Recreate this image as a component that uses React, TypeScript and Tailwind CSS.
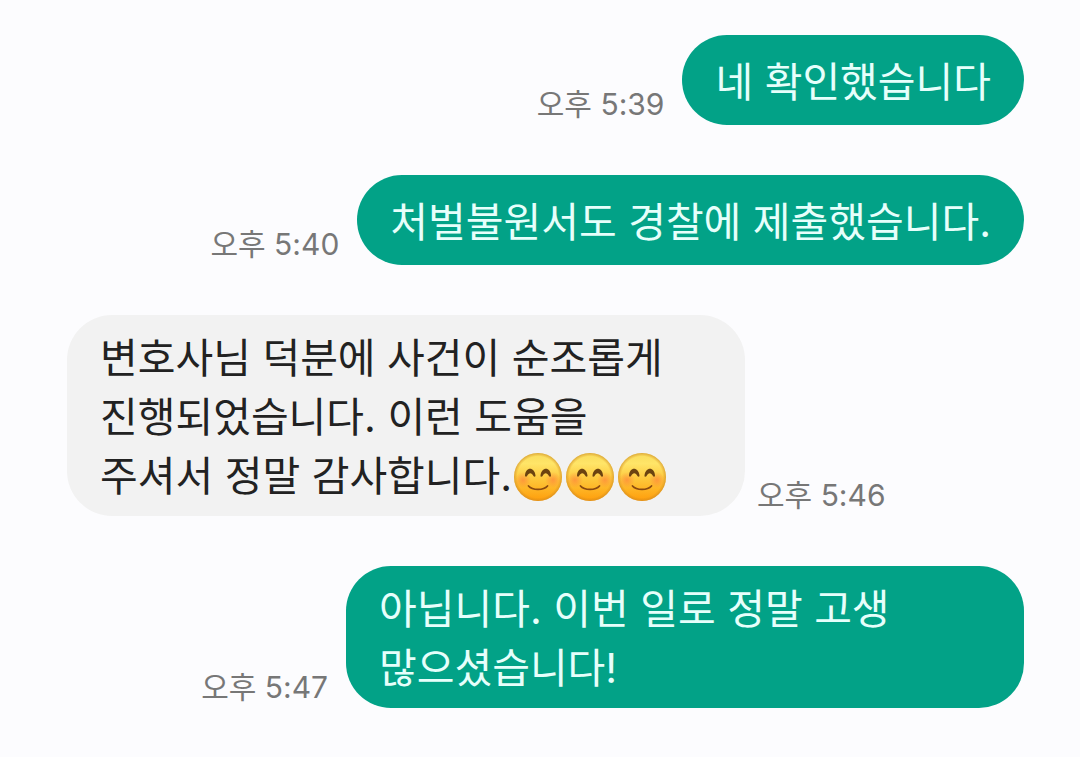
import React from "react";

function Smile() {
  return (
    <svg viewBox="0 0 52 52" className="inline-block size-[52px] shrink-0" role="img" aria-label="😊">
      <defs>
        <linearGradient id="face" x1="0" y1="0" x2="0" y2="1">
          <stop offset="0%" stopColor="#f8dc5c" />
          <stop offset="22%" stopColor="#ffe568" />
          <stop offset="55%" stopColor="#fdc73a" />
          <stop offset="100%" stopColor="#ff9d0a" />
        </linearGradient>
        <radialGradient id="rim">
          <stop offset="86%" stopColor="#d98a1c" stopOpacity="0" />
          <stop offset="100%" stopColor="#c98724" stopOpacity="0.6" />
        </radialGradient>
        <radialGradient id="blush">
          <stop offset="0%" stopColor="#ff7a3c" stopOpacity="0.6" />
          <stop offset="100%" stopColor="#ff7a3c" stopOpacity="0" />
        </radialGradient>
      </defs>
      <circle cx="26" cy="26" r="24" fill="url(#face)" />
      <circle cx="26" cy="26" r="24" fill="url(#rim)" />
      <circle cx="11" cy="29" r="8" fill="url(#blush)" />
      <circle cx="41" cy="29" r="8" fill="url(#blush)" />
      <g fill="#6b4310">
        <path d="M13 24.5C13.500 15.500 22.500 15.500 23.500 24.500C23.500 26 22 26 21.300 24.800C19.800 21.300 16.800 21.300 15.200 24.800C14.500 26 13 26 13 24.500Z" />
        <path d="M28.500 24.500C29.500 15.500 38.500 15.500 39 24.500C39 26 37.500 26 36.800 24.800C35.200 21.300 32.200 21.300 30.700 24.800C30 26 28.500 26 28.500 24.500Z" />
      </g>
      <path d="M16.500 35c4 4.600 15 4.600 19 0" fill="none" stroke="#8a4a10" strokeLinecap="round" strokeWidth="1.800" />
    </svg>
  );
}

type Message = { id: number; mine: boolean; time: string; lines: string[]; smiles?: number };

const messages: Message[] = [
  { id: 1, mine: true, time: "오후 5:39", lines: ["네 확인했습니다"] },
  { id: 2, mine: true, time: "오후 5:40", lines: ["처벌불원서도 경찰에 제출했습니다."] },
  { id: 3, mine: false, time: "오후 5:46", lines: ["변호사님 덕분에 사건이 순조롭게", "진행되었습니다. 이런 도움을", "주셔서 정말 감사합니다."], smiles: 3 },
  { id: 4, mine: true, time: "오후 5:47", lines: ["아닙니다. 이번 일로 정말 고생", "많으셨습니다!"] },
];

function Bubble({ message }: { message: Message }) {
  const { mine, lines, smiles = 0 } = message;
  return (
    <div
      className={
        (mine ? "bg-[#02a287] text-[#e6fffb] " : "bg-[#f2f2f2] text-[#222222] ") +
        (lines.length > 1 ? "w-[678px] " : "") +
        "flex min-h-[90px] flex-col justify-center rounded-[45px] px-[33px] pt-[14px] pb-[10px] text-[41px] leading-[59px]"
      }
    >
      {lines.map((line, i) => (
        <p key={line} className="flex h-[59px] items-center whitespace-nowrap">
          {line}
          {i === lines.length - 1 && Array.from({ length: smiles }, (_, n) => <Smile key={n} />)}
        </p>
      ))}
    </div>
  );
}

export default function App() {
  return (
    <main className="flex min-h-screen flex-col gap-[50px] bg-[#fcfcfe] pt-[35px] pr-14 pb-12 pl-[67px] font-['Inter','Noto_Sans_CJK_KR',sans-serif]">
      {messages.map((m) => (
        <article key={m.id} className={m.mine ? "flex items-end justify-end gap-[18px]" : "flex flex-row-reverse items-end justify-end gap-3"}>
          <time className="pb-1 text-[30px] leading-[34px] whitespace-nowrap text-[#777777]">{m.time}</time>
          <Bubble message={m} />
        </article>
      ))}
    </main>
  );
}
